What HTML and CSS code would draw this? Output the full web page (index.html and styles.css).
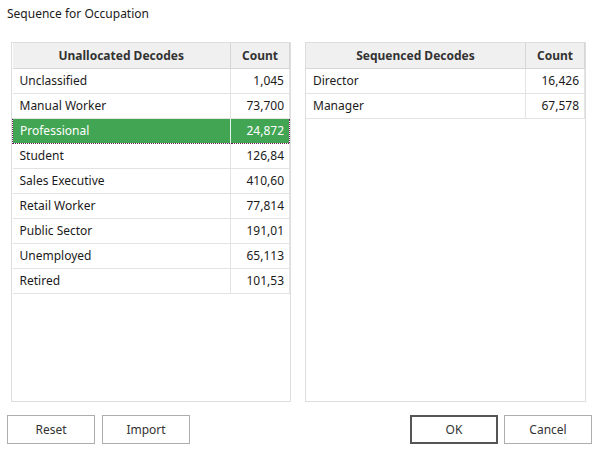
FILE: index.html
```html
<!DOCTYPE html>
<html lang="en">
<head>
    <meta charset="UTF-8">
    <title>Sequence for Occupation</title>
    <link rel="stylesheet" href="styles.css">
</head>
<body>
    <div class="dialog">
        <div class="title">Sequence for Occupation</div>

        <div class="panels">
            <div class="panel panel-left">
                <table class="grid">
                    <thead>
                        <tr><th class="name">Unallocated Decodes</th><th class="count">Count</th></tr>
                    </thead>
                    <tbody>
                        <tr><td class="name">Unclassified</td><td class="count">1,045</td></tr>
                        <tr><td class="name">Manual Worker</td><td class="count">73,700</td></tr>
                        <tr class="selected"><td class="name">Professional</td><td class="count">24,872</td></tr>
                        <tr><td class="name">Student</td><td class="count">126,84</td></tr>
                        <tr><td class="name">Sales Executive</td><td class="count">410,60</td></tr>
                        <tr><td class="name">Retail Worker</td><td class="count">77,814</td></tr>
                        <tr><td class="name">Public Sector</td><td class="count">191,01</td></tr>
                        <tr><td class="name">Unemployed</td><td class="count">65,113</td></tr>
                        <tr><td class="name">Retired</td><td class="count">101,53</td></tr>
                    </tbody>
                </table>
            </div>

            <div class="panel panel-right">
                <table class="grid">
                    <thead>
                        <tr><th class="name">Sequenced Decodes</th><th class="count">Count</th></tr>
                    </thead>
                    <tbody>
                        <tr><td class="name">Director</td><td class="count">16,426</td></tr>
                        <tr><td class="name">Manager</td><td class="count">67,578</td></tr>
                    </tbody>
                </table>
            </div>
        </div>

        <div class="buttons">
            <div class="button-group">
                <button class="btn">Reset</button>
                <button class="btn">Import</button>
            </div>
            <div class="button-group right">
                <button class="btn default">OK</button>
                <button class="btn">Cancel</button>
            </div>
        </div>
    </div>
</body>
</html>
```

FILE: styles.css
```css
html, body {
    margin: 0;
    background: #fff;
}
body {
    font-family: "Noto Sans", "Open Sans", sans-serif;
    font-size: 12px;
    color: #1b1b1b;
}
.dialog {
    width: 596px;
    height: 451px;
}
.title {
    height: 42px;
    box-sizing: border-box;
    padding: 6px 7px 0;
    line-height: 16px;
}
.panels {
    display: flex;
    gap: 14px;
    padding-left: 11px;
}
.panel {
    box-sizing: border-box;
    height: 360px;
    border: 1px solid #dedede;
    background: #fff;
}
.panel-left {
    width: 280px;
}
.panel-right {
    width: 281px;
}
.grid {
    width: 100%;
    border-collapse: collapse;
    table-layout: fixed;
}
.grid th {
    height: 25px;
    background: #f0f0f0;
    font-weight: bold;
    color: #333;
    text-align: center;
    border-right: 1px solid #d6d6d6;
    border-bottom: 1px solid #d6d6d6;
    padding: 0;
}
.grid td {
    height: 22px;
    padding: 0 6px 2px 7px;
    border-right: 1px solid #e3e3e3;
    border-bottom: 1px solid #e3e3e3;
    white-space: nowrap;
    overflow: hidden;
}
.grid th.count,
.grid td.count {
    width: 58px;
}
.grid td.count {
    text-align: right;
    padding-right: 5px;
}
.grid tr.selected td {
    background: #42a553;
    color: #fff;
    border-top: 1px dotted #6b1468;
    border-bottom: 1px dotted #6b1468;
}
.grid tr.selected td.name {
    border-left: 1px dotted #6b1468;
    border-right: 1px solid #e8f3ea;
}
.grid tr.selected td.count {
    border-right: 1px dotted #6b1468;
}
.buttons {
    display: flex;
    justify-content: space-between;
    margin-top: 13px;
    padding: 0 4px 0 7px;
}
.button-group {
    display: flex;
    gap: 7px;
}
.button-group.right {
    gap: 6px;
}
.btn {
    box-sizing: border-box;
    width: 88px;
    height: 29px;
    font-family: inherit;
    font-size: 12px;
    color: #333;
    background: #fff;
    border: 1px solid #adadad;
    border-radius: 0;
    padding: 0;
}
.btn.default {
    border: 2px solid #555;
}
```
